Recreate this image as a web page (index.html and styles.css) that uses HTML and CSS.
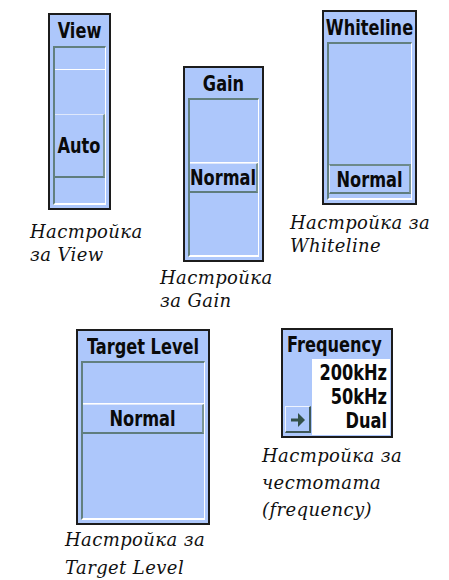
FILE: index.html
```html
<!DOCTYPE html>
<html lang="bg">
<head>
    <meta charset="UTF-8">
    <meta name="viewport" content="width=device-width, initial-scale=1.0">
    <link rel="stylesheet" href="styles.css">
    <title>Настройки на сонара</title>
</head>
<body>

    <div class="row row-top">

        <figure class="fig fig-view">
            <div class="panel panel-view">
                <div class="panel-title"><span class="lcd">View</span></div>
                <div class="panel-list">
                    <div class="list-sep sep-view"></div>
                    <div class="list-item item-auto"><span class="lcd">Auto</span></div>
                </div>
            </div>
            <figcaption>Настройка<br>за View</figcaption>
        </figure>

        <figure class="fig fig-gain">
            <div class="panel panel-gain">
                <div class="panel-title"><span class="lcd">Gain</span></div>
                <div class="panel-list">
                    <div class="list-sep sep-gain"></div>
                    <div class="list-item"><span class="lcd">Normal</span></div>
                </div>
            </div>
            <figcaption>Настройка<br>за Gain</figcaption>
        </figure>

        <figure class="fig fig-white">
            <div class="panel panel-white">
                <div class="panel-title"><span class="lcd">Whiteline</span></div>
                <div class="panel-list">
                    <div class="list-sep sep-white"></div>
                    <div class="list-item"><span class="lcd">Normal</span></div>
                </div>
            </div>
            <figcaption>Настройка за<br>Whiteline</figcaption>
        </figure>

    </div>

    <div class="row row-bottom">

        <figure class="fig fig-target">
            <div class="panel panel-target">
                <div class="panel-title"><span class="lcd">Target Level</span></div>
                <div class="panel-list">
                    <div class="list-sep sep-target"></div>
                    <div class="list-item"><span class="lcd">Normal</span></div>
                </div>
            </div>
            <figcaption>Настройка за<br>Target Level</figcaption>
        </figure>

        <figure class="fig fig-freq">
            <div class="panel panel-freq">
                <div class="panel-title title-left"><span class="lcd">Frequency</span></div>
                <div class="freq-body">
                    <div class="freq-side">
                        <div class="arrow-btn">
                            <svg width="22" height="22" viewBox="0 0 22 22">
                                <path d="M4 12 H13" stroke="#34514a" stroke-width="3" fill="none"/>
                                <path d="M11 5 L18 12 L11 19 Z" fill="#34514a"/>
                            </svg>
                        </div>
                    </div>
                    <div class="freq-options">
                        <div class="lcd">200kHz</div>
                        <div class="lcd">50kHz</div>
                        <div class="lcd">Dual</div>
                    </div>
                </div>
            </div>
            <figcaption>Настройка за<br>честотата<br>(frequency)</figcaption>
        </figure>

    </div>

</body>
</html>
```

FILE: styles.css
```css
body {
    margin: 0;
    background: #ffffff;
    width: 449px;
    height: 580px;
    overflow: hidden;
}

.row {
    display: flex;
    align-items: flex-start;
}

.fig {
    margin: 0;
    display: flex;
    flex-direction: column;
    align-items: flex-start;
}

figcaption {
    font-family: "DejaVu Serif", serif;
    font-style: italic;
    font-size: 18px;
    letter-spacing: 0.4px;
    line-height: 23px;
    color: #111;
    white-space: nowrap;
}

/* top row */
.row-top {
    padding-left: 30px;
}

.fig-view {
    width: 130px;
    padding-top: 13px;
}
.fig-view .panel {
    margin-left: 18px;
}
.fig-view figcaption {
    margin-top: 10px;
}

.fig-gain {
    width: 130px;
    padding-top: 66px;
}
.fig-gain .panel {
    margin-left: 23px;
}
.fig-gain figcaption {
    margin-top: 4px;
}

.fig-white {
    padding-top: 10px;
}
.fig-white .panel {
    margin-left: 32px;
}
.fig-white figcaption {
    margin-top: 6px;
}

/* bottom row */
.row-bottom {
    padding-left: 65px;
    margin-top: 9px;
}

.fig-target {
    width: 197px;
    padding-top: 8px;
}
.fig-target .panel {
    margin-left: 11px;
}
.fig-target figcaption {
    margin-top: 1px;
    line-height: 28px;
}

.fig-freq {
    padding-top: 7px;
}
.fig-freq .panel {
    margin-left: 19px;
}
.fig-freq figcaption {
    margin-top: 4px;
    line-height: 27px;
}

/* garmin style panels */
.panel {
    box-sizing: border-box;
    background: #adc7fb;
    border: 2px solid #1c1c1c;
    display: flex;
    flex-direction: column;
    font-family: "DejaVu Sans Condensed", "DejaVu Sans", sans-serif;
    font-stretch: condensed;
    font-weight: bold;
    font-size: 18px;
    color: #0a0a0a;
}

/* the unit's font is tall and narrow */
.lcd {
    display: inline-block;
    transform: scaleY(1.2);
}

.panel-view   { width: 63px;  height: 197px; }
.panel-gain   { width: 81px;  height: 196px; }
.panel-white  { width: 95px;  height: 195px; }
.panel-target { width: 134px; height: 196px; }
.panel-freq   { width: 112px; height: 110px; }

.panel-title {
    height: 30px;
    display: flex;
    align-items: center;
    justify-content: center;
    white-space: nowrap;
}
.panel-view .panel-title {
    height: 31px;
}
.title-left {
    justify-content: flex-start;
    padding-left: 4px;
    height: 29px;
}

.panel-list {
    flex: 1;
    margin: 0 3px 3px 3px;
    border-top: 2px solid #62807f;
    border-left: 2px solid #62807f;
    border-right: 1px solid #ffffff;
    border-bottom: 2px solid #ffffff;
}

.list-sep {
    border-bottom: 1px solid #ffffff;
}
.sep-view   { height: 21px; margin-bottom: 44px; }
.sep-gain   { height: 62px; }
.sep-white  { height: 120px; border-bottom: none; }
.sep-target { height: 40px; }

.list-item {
    height: 30px;
    box-sizing: border-box;
    display: flex;
    align-items: center;
    justify-content: center;
    border-top: 1px solid #dfe8fb;
    border-bottom: 2px solid #5f7d7d;
    border-right: 2px solid #7a9494;
}
.panel-white .list-item {
    border-top: 2px solid #6d8a8a;
    border-left: 1px solid #e3eafc;
}
.item-auto {
    height: 64px;
}

/* frequency panel */
.freq-body {
    flex: 1;
    display: flex;
}

.freq-side {
    width: 29px;
    display: flex;
    flex-direction: column;
    justify-content: flex-end;
    padding-bottom: 3px;
}

.arrow-btn {
    box-sizing: border-box;
    width: 26px;
    height: 27px;
    margin-left: 2px;
    border-top: 1px solid #eef3fe;
    border-left: 1px solid #eef3fe;
    border-right: 2px solid #3f5858;
    border-bottom: 2px solid #3f5858;
    display: flex;
    align-items: center;
    justify-content: center;
}

.freq-options {
    flex: 1;
    background: #ffffff;
    margin: 0 1px 1px 0;
    padding: 2px 3px 0 0;
    text-align: right;
    line-height: 24px;
}
.freq-options .lcd {
    display: block;
    transform-origin: right center;
}
```
